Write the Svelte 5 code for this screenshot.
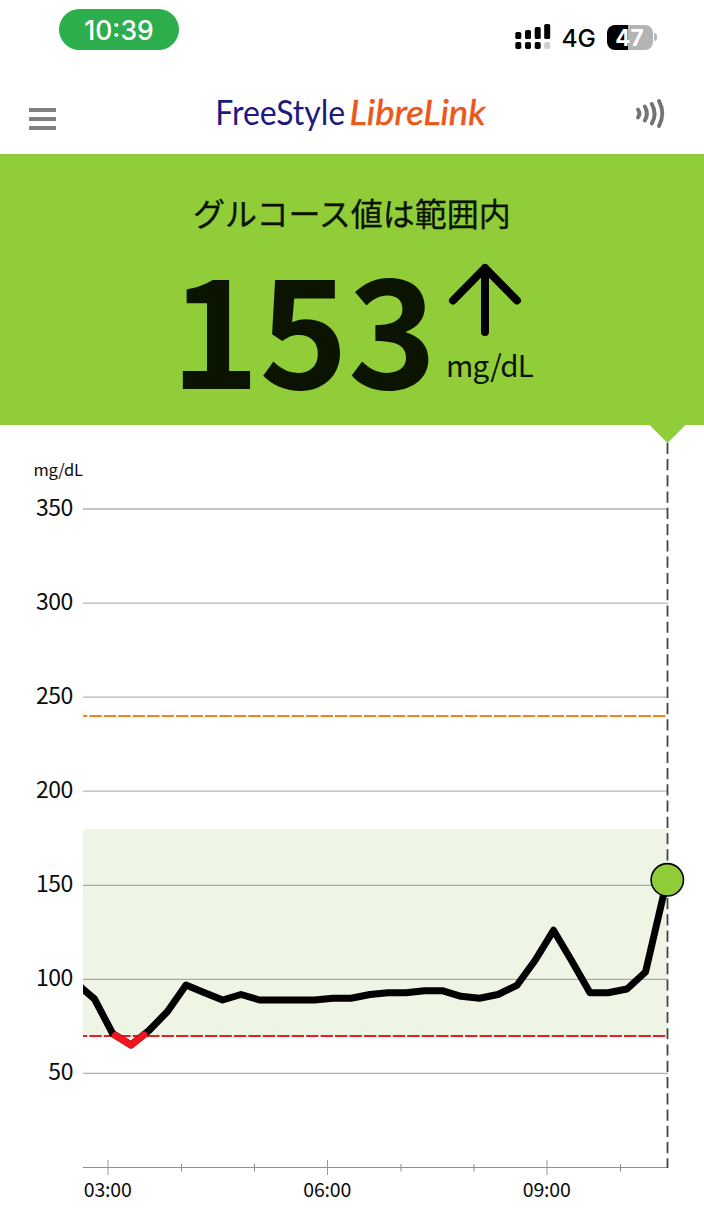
<script>
  const y = (v) => 509 + (350 - v) * 1.8814;
  const levels = [350, 300, 250, 200, 150, 100, 50];
  const hours = [
    { x: 108, label: '03:00' },
    { x: 327.5, label: '06:00' },
    { x: 547, label: '09:00' }
  ];
  const minor = [181.5, 254.5, 401, 474, 620.5];
  const trace = [
    [78, 984.5], [83, 989], [94.5, 999], [112.6, 1033.5], [131, 1045], [149, 1030.5], [167.5, 1011.5],
    [186, 985], [204, 992.5], [222.6, 1000], [241, 994.5], [259.5, 1000], [314.5, 1000],
    [333, 998.3], [351, 998.3], [370, 994.5], [388, 992.7], [406, 992.7], [424.5, 990.8],
    [443, 990.8], [461, 996.3], [479.5, 998.2], [498, 994.5], [517, 985.3], [535, 960.5],
    [553.5, 930.3], [571.5, 960.5], [590, 992.7], [608, 992.7], [627, 989], [645.5, 972], [667, 880]
  ];
  const points = trace.map((p) => p.join(',')).join(' ');
</script>

<div class="screen">
  <div class="status">
    <span class="clock">10:39</span>
    <div class="indicators">
      <svg width="36" height="26" viewBox="0 0 36 26">
        <rect x="0.3" y="8" width="6" height="7" rx="1.6" />
        <rect x="10" y="6" width="6" height="9" rx="1.6" />
        <rect x="19.7" y="3" width="6" height="12" rx="1.6" />
        <rect x="29.2" y="0" width="6" height="15" rx="1.6" />
        <rect x="0.3" y="18" width="6" height="7" rx="1.8" />
        <rect x="10" y="18" width="6" height="7" rx="1.8" />
        <rect x="19.7" y="18" width="6" height="7" rx="1.8" />
        <rect x="29.2" y="18" width="6" height="7" rx="1.8" fill="#cfcfcf" />
      </svg>
      <span class="network">4G</span>
      <div class="battery"><span class="cell">47</span><span class="nub"></span></div>
    </div>
  </div>

  <header>
    <div class="menu"><i></i><i></i><i></i></div>
    <svg class="logo" width="276" height="54" viewBox="0 0 276 54">
      <text x="0.2" y="30.5" class="free" textLength="130" lengthAdjust="spacingAndGlyphs">FreeStyle</text>
      <text x="134.5" y="31" class="libre" textLength="136" lengthAdjust="spacingAndGlyphs">LibreLink</text>
    </svg>
    <svg class="scan" width="30" height="32" viewBox="0 0 30 32" fill="none" stroke="#747474" stroke-width="3.9" stroke-linecap="round">
      <path d="M3 11.5Q5.8 15.5 3 19.5" />
      <path d="M9.8 8.5Q14 15.5 9.8 22.5" />
      <path d="M16.8 6Q22.4 15.8 16.8 25.5" />
      <path d="M24 3Q30.6 15.5 24 28" />
    </svg>
  </header>

  <section class="reading">
    <h1>グルコース値は範囲内</h1>
    <div class="value">
      <strong>153</strong>
      <div class="trend">
        <svg width="74" height="76" viewBox="0 0 74 76" fill="none" stroke="#000" stroke-width="8" stroke-linecap="round" stroke-linejoin="round">
          <path d="M37 70V6M5 38.5L37 6L69 38.5" />
        </svg>
        <span>mg/dL</span>
      </div>
    </div>
  </section>

  <svg class="chart" width="704" height="795" viewBox="0 425 704 795">
    <clipPath id="plot"><rect x="83" y="430" width="621" height="740" /></clipPath>
    <rect x="83" y="829" width="584.5" height="207" fill="#eef5e5" />
    {#each levels as v}
      <line x1="83" x2="668" y1={y(v)} y2={y(v)} stroke="#000" stroke-opacity=".3" stroke-width="1.3" />
      <text x="73" y={y(v) + 7} class="level">{v}</text>
    {/each}
    <text x="33.5" y="476" class="unit">mg/dL</text>

    <line x1="83" x2="668" y1="1167.5" y2="1167.5" stroke="#929292" />
    {#each hours as h}
      <line x1={h.x} x2={h.x} y1="1160" y2="1175" stroke="#999" />
      <text x={h.x - 0.3} y="1196.5" class="hour">{h.label}</text>
    {/each}
    {#each minor as x}
      <line x1={x} x2={x} y1="1164" y2="1171.5" stroke="#888" />
    {/each}

    <line x1="83" x2="666" y1="716" y2="716" stroke="#f58220" stroke-width="2" stroke-dasharray="12.4 2.05" stroke-dashoffset="8.1" />
    <line x1="83" x2="666" y1="1036" y2="1036" stroke="#ed1c24" stroke-width="2" stroke-dasharray="12.4 2.05" stroke-dashoffset="8.1" />
    <line x1="667.5" x2="667.5" y1="442.8" y2="1168" stroke="#444" stroke-width="1.8" stroke-dasharray="11.2 5.06" />

    <g clip-path="url(#plot)" fill="none" stroke-width="7" stroke-linejoin="round">
      <polyline {points} stroke="#000" />
      <polyline points="115.5,1035.5 131,1045 144,1035" stroke="#f0151d" stroke-linecap="round" />
    </g>
    <circle cx="667.3" cy="879.8" r="16.2" fill="#8fcc38" stroke="#000" stroke-width="1.6" />
    <path d="M649.5 425H685.5L667.5 443Z" fill="#91cd38" />
  </svg>
</div>

<style>
  :global(body) { background: #fff; }
  .screen {
    width: 704px; height: 1220px; overflow: hidden; display: flex; flex-direction: column;
    background: #fff; color: #000; font-family: "Noto Sans CJK JP", sans-serif;
  }
  svg { display: block; flex: none; overflow: visible; }
  .status {
    height: 64px; box-sizing: border-box; padding: 9px 47px 0 59px;
    display: flex; justify-content: space-between; align-items: flex-start;
  }
  .clock {
    width: 120px; height: 41px; border-radius: 21px; background: #2cae4d; color: #fff;
    font: 500 26.5px/43px Inter, sans-serif; text-align: center;
  }
  .indicators { display: flex; align-items: center; margin-top: 15px; height: 26px; }
  .network { font: 500 24.5px/26px Inter, sans-serif; margin-left: 11px; width: 45px; padding-top: 2px; box-sizing: border-box; }
  .battery { display: flex; align-items: center; gap: 1.5px; }
  .cell {
    width: 46px; height: 25px; border-radius: 8px; color: #fff; text-align: center;
    background: linear-gradient(90deg, #000 0 21px, #b3b5b4 21px);
    font: 700 22.5px/25px Inter, sans-serif;
  }
  .nub { width: 3px; height: 8px; border-radius: 0 3px 3px 0; background: #b8b8b8; }
  header { height: 90px; display: flex; align-items: flex-start; }
  .menu { width: 27px; margin: 44px 0 0 29px; display: flex; flex-direction: column; gap: 5px; }
  .menu i { height: 4px; background: #808080; }
  .logo { margin: 30px 0 0 159px; }
  .free { font: 400 35px Lato, sans-serif; fill: #1e1a80; }
  .libre { font: italic 400 34px Lato, sans-serif; fill: #ea5719; stroke: #ea5719; stroke-width: .5px; }
  .scan { margin: 34px 0 0 144px; }
  .reading {
    height: 271px; background: #91cd38; color: #0a1400;
    display: flex; flex-direction: column; align-items: center;
  }
  h1 { margin: 34px 0 0; font-size: 32px; line-height: 48px; font-weight: 400; -webkit-text-stroke: .3px #0a1400; }
  .value { display: flex; align-items: flex-start; margin-top: 12px; padding-left: 12px; height: 150px; }
  strong { font-size: 151px; line-height: 150px; font-weight: 700; letter-spacing: -.5px; }
  .trend { display: flex; flex-direction: column; width: 105px; margin: 14px 0 0 4px; }
  .trend svg { margin: 0 0 0 8px; }
  .trend span { font-size: 29.5px; line-height: 40px; letter-spacing: -.6px; margin: 6px 0 0 5.5px; }
  .level { font-size: 23px; text-anchor: end; letter-spacing: -.4px; fill: #0c0c0c; }
  .unit { font-size: 16.5px; letter-spacing: -.3px; fill: #0c0c0c; }
  .hour { font-size: 19.5px; letter-spacing: -.2px; text-anchor: middle; fill: #0c0c0c; }
</style>
